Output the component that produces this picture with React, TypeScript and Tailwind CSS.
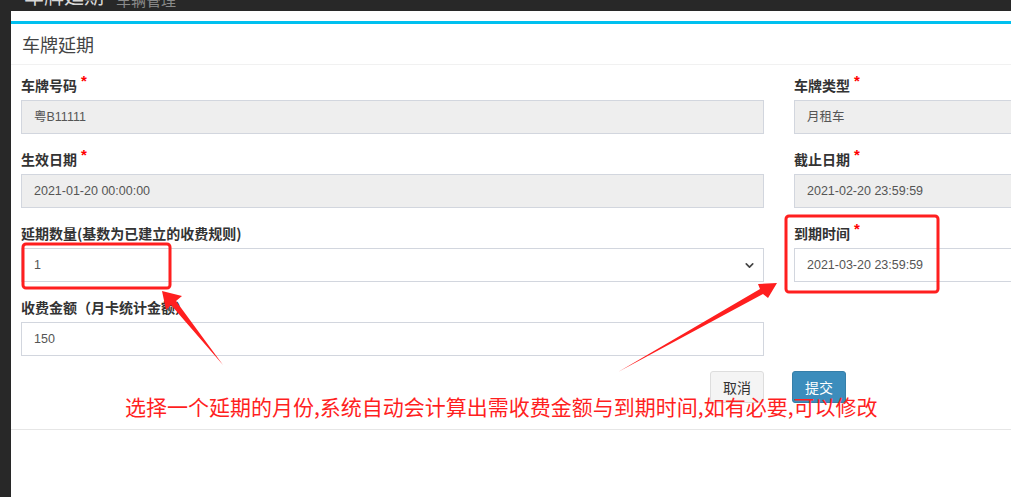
import { ChevronDown } from 'lucide-react'

const cjk = { fontFamily: '"Noto Sans CJK SC", "Noto Sans", sans-serif' }
const latin = { fontFamily: '"Liberation Sans", "Noto Sans CJK SC", sans-serif' }

function Label({ text, required }: { text: string; required?: boolean }) {
  return (
    <div className="h-5 mb-[5px] flex items-center text-[14px] font-bold text-[#333] leading-5" style={cjk}>
      <span>{text}</span>
      {required && (
        <span className="ml-[4px] -mt-[9px] text-[15px] text-[#f00] leading-none" style={latin}>
          *
        </span>
      )}
    </div>
  )
}

function Field({
  label,
  value,
  required,
  disabled,
  select,
}: {
  label: string
  value: string
  required?: boolean
  disabled?: boolean
  select?: boolean
}) {
  return (
    <div className="mb-[15px]">
      <Label text={label} required={required} />
      <div
        className={`h-[34px] flex items-center justify-between border border-[#d2d6de] pl-3 pr-[7px] text-[12.5px] text-[#555] ${
          disabled ? 'bg-[#eee]' : 'bg-white'
        }`}
        style={latin}
      >
        <span>{value}</span>
        {select && <ChevronDown size={13} strokeWidth={3} className="text-[#444]" />}
      </div>
    </div>
  )
}

export default function App() {
  return (
    <div className="relative w-[1011px] h-[497px] overflow-hidden bg-[#282828]">
      {/* window title, cut off by the top edge */}
      <div className="h-[11px] overflow-hidden pl-[24px]" style={cjk}>
        <div className="-mt-[19px] flex items-end gap-3">
          <span className="text-[20px] text-[#d8d8d8]">车牌延期</span>
          <span className="text-[15px] text-[#8a8a8a]">车辆管理</span>
        </div>
      </div>

      <div className="ml-[11px] h-[486px] bg-white pt-[10px]">
        <div className="w-[1100px] border-t-[3px] border-[#00c0ef]">
          <div
            className="h-[41px] flex items-center px-[11px] text-[18px] text-[#444] border-b border-[#f1f1f1]"
            style={cjk}
          >
            车牌延期
          </div>

          <div className="px-[10px] pt-[10px] pb-[26px] border-b border-[#e6e6e6]">
            <div className="grid grid-cols-[743px_260px] gap-x-[30px]">
              <Field label="车牌号码" value="粤B11111" required disabled />
              <Field label="车牌类型" value="月租车" required disabled />
              <Field label="生效日期" value="2021-01-20 00:00:00" required disabled />
              <Field label="截止日期" value="2021-02-20 23:59:59" required disabled />
              <Field label="延期数量(基数为已建立的收费规则)" value="1" select />
              <Field label="到期时间" value="2021-03-20 23:59:59" required />
              <Field label="收费金额（月卡统计金额）" value="150" />
              <div />
              <div className="flex justify-end">
                <button
                  className="h-[32px] w-[54px] rounded-[3px] border border-[#ddd] bg-[#f4f4f4] text-[14px] text-[#333]"
                  style={cjk}
                >
                  取消
                </button>
              </div>
              <div className="-ml-[2px]">
                <button
                  className="h-[32px] w-[54px] rounded-[3px] border border-[#367fa9] bg-[#3c8dbc] text-[14px] text-white"
                  style={cjk}
                >
                  提交
                </button>
              </div>
            </div>
          </div>
        </div>
      </div>

      {/* red annotations laid over the screenshot */}
      <svg className="absolute left-0 top-0 pointer-events-none" width="1011" height="497">
        <rect x="23" y="244" width="147" height="44" rx="3" fill="none" stroke="#ff1f1f" strokeWidth="3" />
        <rect x="786" y="216" width="152" height="76" rx="3" fill="none" stroke="#ff1f1f" strokeWidth="3" />
        <polygon points="162,291 182,296 176,301 223,365 171,305 166,310" fill="#ff1f1f" />
        <polygon points="777,283 768,298 763,294 618,372 760,289 758,284" fill="#ff1f1f" />
      </svg>
      <div
        className="absolute left-[125px] top-[396px] text-[21px] leading-none text-[#ff1f1f] whitespace-nowrap"
        style={cjk}
      >
        选择一个延期的月份,系统自动会计算出需收费金额与到期时间,如有必要,可以修改
      </div>
    </div>
  )
}
